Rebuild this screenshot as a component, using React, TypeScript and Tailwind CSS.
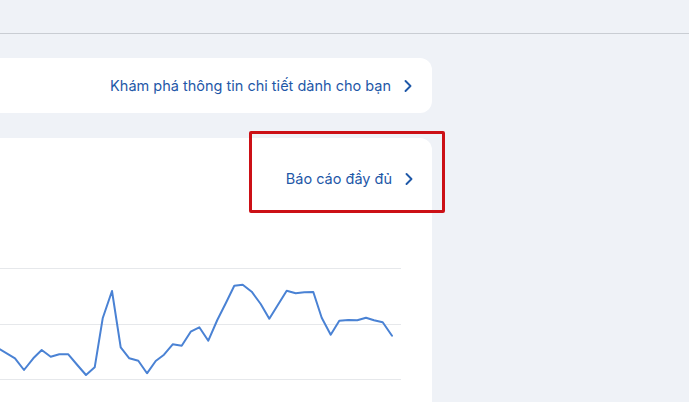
import { ChevronRight } from 'lucide-react';

const points: [number, number][] = [
  [0, 349.3], [15, 358.3], [24, 370], [33.3, 358.3], [41.7, 350], [50.7, 356.7], [59.3, 354.3],
  [68.3, 354.3], [77.3, 365], [86, 375], [94.7, 367.3], [102.7, 318.3], [112, 291], [120.7, 347.3],
  [129.3, 358.3], [138.3, 360.7], [147, 373.3], [155.7, 361], [164, 354.7], [172.7, 344.3],
  [181.7, 345.7], [190.7, 331.7], [199.3, 327.3], [208.3, 340.7], [217.3, 320], [226, 302.7],
  [234.3, 285.7], [242.7, 284.7], [251.7, 291.7], [260.7, 304], [269.3, 318.7], [278.3, 304.3],
  [286.7, 290.7], [295.7, 293.3], [304.3, 292.3], [313.3, 292], [321.7, 317.7], [330.7, 334.7],
  [339.3, 320.7], [348.3, 320], [357.3, 320.3], [366, 317.7], [374, 320.3], [382.7, 322.3], [392, 335.7],
];

// chart area starts at y=240 in page coords
const TOP = 240;

function LinkRow({ label }: { label: string }) {
  return (
    <a className="flex items-center gap-[7px] text-[14.5px] font-normal text-[#1f58a8] cursor-pointer">
      <span>{label}</span>
      <ChevronRight size={20} strokeWidth={2.3} />
    </a>
  );
}

export default function App() {
  return (
    <div
      className="relative w-[689px] h-[402px] overflow-hidden bg-[#eff2f7] flex flex-col"
      style={{ fontFamily: 'Inter, "Noto Sans", sans-serif' }}
    >
      <div className="h-[34px] shrink-0 border-b border-[#c9cdd3]" />

      <div className="w-[432px] flex flex-col flex-1">
        <div className="mt-[24px] h-[55px] bg-white rounded-r-xl flex items-center justify-end pr-[14px]">
          <LinkRow label="Khám phá thông tin chi tiết dành cho bạn" />
        </div>

        <div className="mt-[25px] flex-1 bg-white rounded-tr-xl flex flex-col">
          <div className="h-[80px] flex items-center justify-end pr-[13px] pt-[1px]">
            <LinkRow label="Báo cáo đầy đủ" />
          </div>
          <div className="h-[22px]" />
          <svg width="432" height="162" viewBox={`0 ${TOP} 432 162`} className="block">
            {[268.5, 324.5, 379.5].map((y) => (
              <line key={y} x1="0" x2="401" y1={y} y2={y} stroke="#e6e8eb" strokeWidth="1" />
            ))}
            <polyline
              points={points.map((p) => p.join(',')).join(' ')}
              fill="none"
              stroke="#4a82d4"
              strokeWidth="2"
              strokeLinejoin="round"
              strokeLinecap="round"
            />
          </svg>
        </div>
      </div>

      {/* highlight annotation */}
      <div className="absolute left-[249px] top-[131px] w-[196px] h-[82px] border-[3px] border-[#cc1016] rounded-[2px]" />
    </div>
  );
}
